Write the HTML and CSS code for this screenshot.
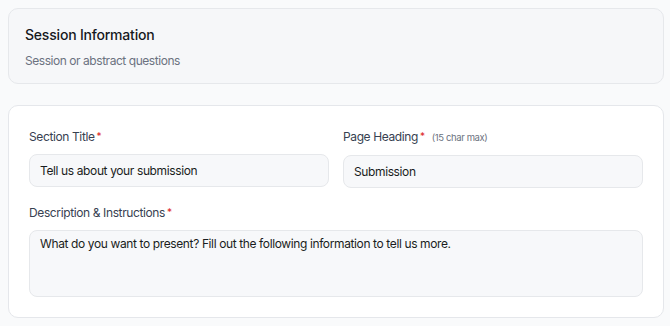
FILE: index.html
```html
<!DOCTYPE html>
<html lang="en">

<head>
    <meta charset="UTF-8">
    <meta name="viewport" content="width=device-width, initial-scale=1.0">
    <title>Session Information</title>
    <link rel="stylesheet" href="styles.css">
</head>

<body>
    <div class="intro">
        <h2>Session Information</h2>
        <p>Session or abstract questions</p>
    </div>

    <div class="card">
        <div class="row">
            <div class="field">
                <label>Section Title<span class="req">*</span></label>
                <div class="input">Tell us about your submission</div>
            </div>
            <div class="field">
                <label>Page Heading<span class="req">*</span> <span class="hint">(15 char max)</span></label>
                <div class="input">Submission</div>
            </div>
        </div>
        <div class="field">
            <label>Description &amp; Instructions<span class="req">*</span></label>
            <div class="input textarea">What do you want to present? Fill out the following information to tell us more.</div>
        </div>
    </div>
</body>

</html>
```

FILE: styles.css
```css
body {
    font-family: Inter, "Noto Sans", sans-serif;
    background: #f9fafb;
    color: #1f2328;
    margin: 0;
    padding: 8px 6px 8px 8px;
    letter-spacing: -0.38px;
}

.intro {
    background: #f6f7f9;
    border: 1px solid #e6e8eb;
    border-radius: 10px;
    padding: 16px 16px 13px 16px;
    height: 45px;
}

.intro h2 {
    margin: 0;
    font-size: 14px;
    font-weight: 500;
    line-height: 20px;
    letter-spacing: -0.2px;
    color: #16191d;
}

.intro p {
    margin: 7px 0 0;
    font-size: 12px;
    line-height: 18px;
    letter-spacing: -0.45px;
    color: #6b7280;
}

.card {
    background: #fff;
    border: 1px solid #e5e7eb;
    border-radius: 10px;
    margin-top: 21px;
    padding: 20px;
    display: flex;
    flex-direction: column;
    gap: 14px;
}

.row {
    display: grid;
    grid-template-columns: 1fr 1fr;
    gap: 14px;
}

.field {
    display: flex;
    flex-direction: column;
    gap: 7px;
}

.field label {
    font-size: 12px;
    line-height: 21px;
    color: #374151;
}

.req {
    color: #dc2626;
    margin-left: 2px;
    font-size: 10px;
    vertical-align: top;
}

.hint {
    font-size: 9.5px;
    color: #6b7280;
    margin-left: 4px;
}

.input {
    background: #f7f8fa;
    border: 1px solid #e6e8eb;
    border-radius: 8px;
    height: 31px;
    padding: 0 10px;
    font-size: 12px;
    line-height: 31px;
    color: #1a1d21;
}

.textarea {
    line-height: 18px;
    padding-top: 4px;
    box-sizing: border-box;
    height: 67px;
}
```
